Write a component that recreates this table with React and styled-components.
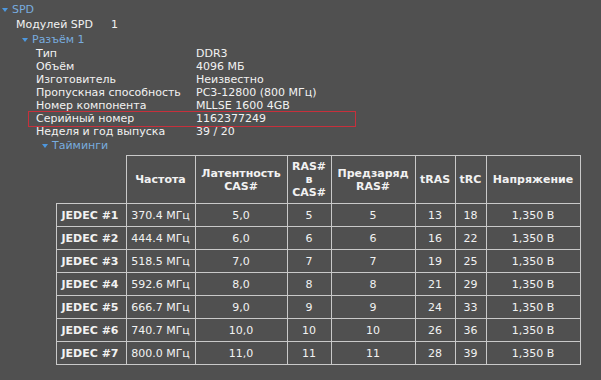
import React from "react";
import styled, { createGlobalStyle } from "styled-components";

const Global = createGlobalStyle`
  html, body { margin: 0; padding: 0; background: #505050; }
  body {
    font-family: "DejaVu Sans", Verdana, sans-serif;
    font-size: 11px;
    color: #f2f2f2;
  }
`;

const Page = styled.div`
  width: 601px;
  height: 380px;
  padding-top: 2px;
  box-sizing: border-box;
  overflow: hidden;
`;

const NodeHead = styled.div`
  display: flex;
  align-items: center;
  height: 15px;
  padding-left: ${(p) => p.$indent + 2}px;
  color: #78acdf;
`;

const Caret = styled.svg`
  width: 6px;
  height: 4px;
  margin-right: 4px;
  flex: none;
`;

const Children = styled.div`
  display: flex;
  flex-direction: column;
`;

const PropRow = styled.div`
  position: relative;
  display: flex;
  align-items: center;
  height: ${(p) => p.$h || 13}px;
  padding-left: ${(p) => p.$indent + 16}px;
  white-space: nowrap;
  ${(p) =>
    p.$marked &&
    `&::after {
      content: "";
      position: absolute;
      left: ${p.$indent + 8}px;
      width: 326px;
      top: -1px;
      height: 14px;
      border: 1px solid #c7303c;
    }`}
`;

const Label = styled.span`
  width: ${(p) => p.$w}px;
  flex: none;
`;

const Value = styled.span``;

const TableWrap = styled.div`
  padding-left: 56px;
  padding-top: 2px;
`;

const Table = styled.table`
  border-collapse: collapse;
  table-layout: fixed;
  width: 525px;
  margin-left: -0.5px;
`;

const HeadCell = styled.th`
  border: 1px solid #c9c9c9;
  font-weight: bold;
  line-height: 13px;
  height: 47px;
  padding: 0 4px;
  text-align: center;
  vertical-align: middle;
  ${(p) => p.$empty && `border-top: none; border-left: none;`}
`;

const RowHead = styled.th`
  border: 1px solid #c9c9c9;
  font-weight: bold;
  text-align: left;
  padding: 0 0 0 5px;
  height: 22px;
  white-space: nowrap;
`;

const Cell = styled.td`
  border: 1px solid #c9c9c9;
  text-align: center;
  padding: 0;
  height: 22px;
  white-space: nowrap;
`;

function Tri() {
  return (
    <Caret viewBox="0 0 6 4">
      <path d="M0 0 L6 0 L3 4 Z" fill="#4d97de" />
    </Caret>
  );
}

const widths = [70, 69, 92, 44, 84, 40, 31, 94];
const headers = [
  "",
  "Частота",
  <>Латентность<br />CAS#</>,
  <>RAS#<br />в<br />CAS#</>,
  <>Предзаряд<br />RAS#</>,
  "tRAS",
  "tRC",
  "Напряжение",
];

const rows = [
  ["JEDEC #1", "370.4 МГц", "5,0", "5", "5", "13", "18"],
  ["JEDEC #2", "444.4 МГц", "6,0", "6", "6", "16", "22"],
  ["JEDEC #3", "518.5 МГц", "7,0", "7", "7", "19", "25"],
  ["JEDEC #4", "592.6 МГц", "8,0", "8", "8", "21", "29"],
  ["JEDEC #5", "666.7 МГц", "9,0", "9", "9", "24", "33"],
  ["JEDEC #6", "740.7 МГц", "10,0", "10", "10", "26", "36"],
  ["JEDEC #7", "800.0 МГц", "11,0", "11", "11", "28", "39"],
];

const props = [
  ["Тип", "DDR3"],
  ["Объём", "4096 МБ"],
  ["Изготовитель", "Неизвестно"],
  ["Пропускная способность", "PC3-12800 (800 МГц)"],
  ["Номер компонента", "MLLSE 1600 4GB"],
  ["Серийный номер", "1162377249", true],
  ["Неделя и год выпуска", "39 / 20"],
];

export default function App() {
  return (
    <Page>
      <Global />
      <NodeHead $indent={0}>
        <Tri />
        SPD
      </NodeHead>
      <Children>
        <PropRow $indent={0} $h={15}>
          <Label $w={95}>Модулей SPD</Label>
          <Value>1</Value>
        </PropRow>
        <NodeHead $indent={20}>
          <Tri />
          Разъём 1
        </NodeHead>
        <Children>
          {props.map(([l, v, m]) => (
            <PropRow key={l} $indent={20} $marked={m}>
              <Label $w={160}>{l}</Label>
              <Value>{v}</Value>
            </PropRow>
          ))}
          <NodeHead $indent={40}>
            <Tri />
            Тайминги
          </NodeHead>
          <TableWrap>
            <Table>
              <colgroup>
                {widths.map((w, i) => (
                  <col key={i} style={{ width: w }} />
                ))}
              </colgroup>
              <thead>
                <tr>
                  {headers.map((h, i) => (
                    <HeadCell key={i} $empty={i === 0}>
                      {h}
                    </HeadCell>
                  ))}
                </tr>
              </thead>
              <tbody>
                {rows.map((r) => (
                  <tr key={r[0]}>
                    <RowHead>{r[0]}</RowHead>
                    {r.slice(1).map((c, i) => (
                      <Cell key={i}>{c}</Cell>
                    ))}
                    <Cell>1,350 В</Cell>
                  </tr>
                ))}
              </tbody>
            </Table>
          </TableWrap>
        </Children>
      </Children>
    </Page>
  );
}
